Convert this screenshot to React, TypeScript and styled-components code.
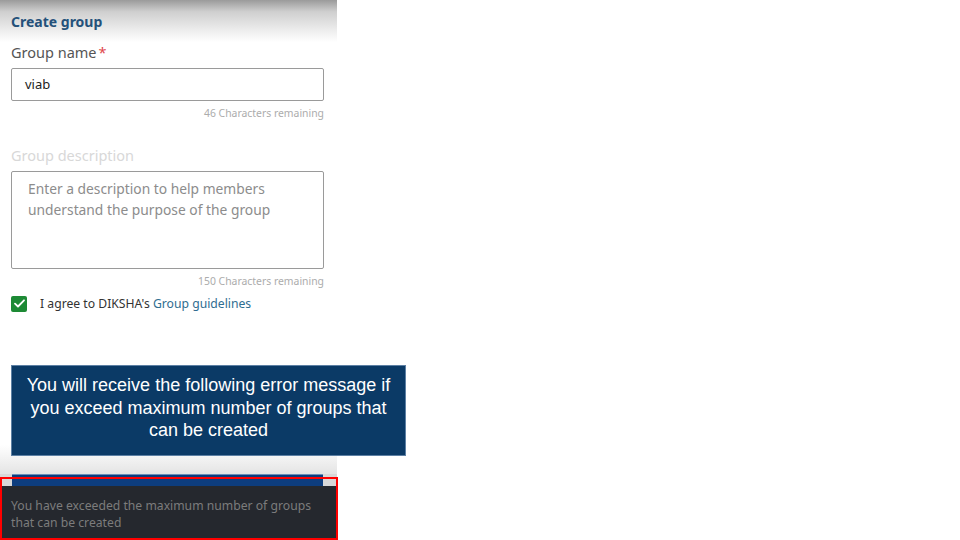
import React from 'react'
import styled, { createGlobalStyle } from 'styled-components'

const GlobalStyle = createGlobalStyle`
  html, body {
    margin: 0;
    padding: 0;
    background: #ffffff;
  }
  body {
    width: 960px;
    height: 540px;
    overflow: hidden;
    font-family: 'Noto Sans', 'Open Sans', sans-serif;
  }
`

const Slide = styled.div`
  position: relative;
  width: 960px;
  height: 540px;
  background: #ffffff;
`

const Phone = styled.div`
  width: 337px;
  height: 540px;
  display: flex;
  flex-direction: column;
  background: #ffffff;
`

const Header = styled.div`
  height: 42px;
  display: flex;
  align-items: center;
  padding-left: 11px;
  background: linear-gradient(to bottom, #9a9a9a 0%, #cfcfcf 28%, #ededed 72%, #ffffff 100%);
  font-size: 14px;
  font-weight: 700;
  color: #24517a;
`

const Form = styled.div`
  display: flex;
  flex-direction: column;
  padding: 0 13px 0 11px;
`

const Label = styled.div<{ $faded?: boolean; $gap?: number }>`
  margin-top: ${({ $gap }) => $gap ?? 0}px;
  line-height: 20px;
  font-size: 14.5px;
  color: ${({ $faded }) => ($faded ? '#d8d8d8' : '#555555')};
`

const Required = styled.span`
  color: #e0474c;
  margin-left: 2px;
`

const Field = styled.div<{ $height: number }>`
  margin-top: 6px;
  height: ${({ $height }) => $height}px;
  box-sizing: border-box;
  border: 1px solid #9a9a9a;
  border-radius: 2px;
  background: #ffffff;
`

const InputValue = styled.div`
  padding-left: 13px;
  line-height: 31px;
  font-size: 13px;
  color: #222222;
`

const Placeholder = styled.div`
  padding: 6px 12px 0 16px;
  line-height: 21px;
  font-size: 13.8px;
  color: #8c8c8c;
`

const Counter = styled.div`
  margin-top: 5px;
  line-height: 14px;
  text-align: right;
  font-size: 10.4px;
  color: #acacac;
`

const AgreeRow = styled.div`
  margin-top: 7px;
  display: flex;
  align-items: center;
  gap: 13px;
  font-size: 12.2px;
  color: #333333;
`

const Checkbox = styled.span`
  width: 16px;
  height: 16px;
  border-radius: 2px;
  background: #1d8a35;
  display: flex;
  align-items: center;
  justify-content: center;
`

const Link = styled.span`
  color: #2f6d90;
`

const Filler = styled.div`
  flex: 1;
  background: linear-gradient(to bottom, #ffffff 0%, #ffffff 82%, #e4e4e4 100%);
`

const Bottom = styled.div`
  position: relative;
  display: flex;
  flex-direction: column;
  height: 66px;
`

const ButtonStrip = styled.div`
  height: 12px;
  display: flex;
  padding: 0 14px 0 12px;
  background: #d8d8d8;
`

const ButtonTop = styled.div`
  flex: 1;
  background: #0d3d7e;
  border-top: 1px solid #6a8fb8;
`

const Toast = styled.div`
  flex: 1;
  background: #25282e;
  padding: 11px 20px 0 11px;
  font-size: 12.2px;
  line-height: 17px;
  color: #7c7c7c;
`

const Highlight = styled.div`
  position: absolute;
  top: 3px;
  left: 0;
  right: -1px;
  bottom: 0;
  border: 2px solid #ff0000;
  pointer-events: none;
`

const Callout = styled.div`
  position: absolute;
  left: 11px;
  top: 365px;
  width: 395px;
  height: 91px;
  box-sizing: border-box;
  padding-top: 8px;
  background: #0b3a66;
  border: 1px solid #5d80a4;
  color: #ffffff;
  font-family: 'Liberation Sans', Arial, sans-serif;
  font-size: 18px;
  line-height: 22.5px;
  text-align: center;
`

const CheckIcon = () => (
  <svg width="11" height="9" viewBox="0 0 11 9" fill="none">
    <path d="M1 4.6 L4 7.5 L10 1.3" stroke="#ffffff" strokeWidth="1.8" strokeLinecap="round" strokeLinejoin="round" />
  </svg>
)

export default function App(): React.ReactElement {
  return (
    <Slide>
      <GlobalStyle />
      <Phone>
        <Header>Create group</Header>
        <Form>
          <Label>
            Group name<Required>*</Required>
          </Label>
          <Field $height={33}>
            <InputValue>viab</InputValue>
          </Field>
          <Counter>46 Characters remaining</Counter>
          <Label $faded $gap={25}>
            Group description
          </Label>
          <Field $height={98}>
            <Placeholder>
              Enter a description to help members
              <br />
              understand the purpose of the group
            </Placeholder>
          </Field>
          <Counter>150 Characters remaining</Counter>
          <AgreeRow>
            <Checkbox>
              <CheckIcon />
            </Checkbox>
            <span>
              I agree to DIKSHA's <Link>Group guidelines</Link>
            </span>
          </AgreeRow>
        </Form>
        <Filler />
        <Bottom>
          <ButtonStrip>
            <ButtonTop />
          </ButtonStrip>
          <Toast>
            You have exceeded the maximum number of groups
            <br />
            that can be created
          </Toast>
          <Highlight />
        </Bottom>
      </Phone>
      <Callout>
        You will receive the following error message if
        <br />
        you exceed maximum number of groups that
        <br />
        can be created
      </Callout>
    </Slide>
  )
}
